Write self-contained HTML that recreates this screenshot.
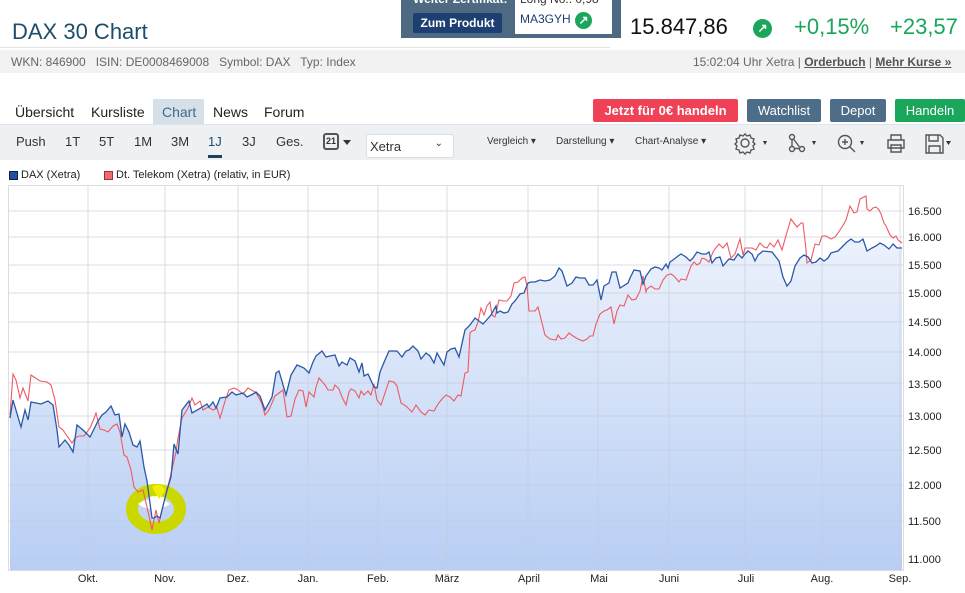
<!DOCTYPE html>
<html><head><meta charset="utf-8"><style>
*{margin:0;padding:0;box-sizing:border-box}
body{width:965px;height:593px;overflow:hidden;background:#fff;font-family:"Liberation Sans",sans-serif;position:relative;color:#333}
.a{position:absolute;white-space:nowrap}
.btn{position:absolute;height:23px;color:#fff;font-size:13px;font-weight:bold;text-align:center;line-height:23px;border-radius:2px}
.tb{position:absolute;top:134px;font-size:13px;color:#333}
.sm{position:absolute;top:136px;font-size:10px;color:#333}
</style></head><body>
<div class="a" style="left:12px;top:19px;font-size:22px;color:#1e4d6b">DAX 30 Chart</div>
<div class="a" style="left:0;top:47px;width:610px;height:1px;background:#e2e2e2"></div>
<div class="a" style="left:0;top:50px;width:965px;height:23px;background:#f2f2f2"></div>
<div class="a" style="left:11px;top:55px;font-size:12px;color:#666">WKN: 846900 &nbsp; ISIN: DE0008469008 &nbsp; Symbol: DAX &nbsp; Typ: Index</div>
<div class="a" style="left:693px;top:55px;font-size:12px;color:#666">15:02:04 Uhr Xetra | <u style="color:#555;font-weight:bold">Orderbuch</u> | <u style="color:#555;font-weight:bold">Mehr Kurse »</u></div>
<div class="a" style="left:401px;top:0;width:220px;height:38px;background:#4e6a82;overflow:hidden"><div class="a" style="left:12px;top:-8px;font-size:12px;color:#fff;font-weight:bold">Weiter Zertifikat:</div></div>
<div class="a" style="left:515px;top:0;width:97px;height:34px;background:#fff;overflow:hidden"><div class="a" style="left:5px;top:-8px;font-size:12px;color:#333">Long No.: 0,98</div></div>
<div class="a" style="left:413px;top:13px;width:89px;height:20px;background:#1d3f72;border-radius:2px;color:#fff;font-size:12px;font-weight:bold;text-align:center;line-height:20px">Zum Produkt</div>
<div class="a" style="left:520px;top:12px;font-size:12px;color:#1d3f72">MA3GYH</div>
<div class="a" style="left:575px;top:12px;width:17px;height:17px;border-radius:50%;background:#1aa65b;color:#fff;font-size:12px;text-align:center;line-height:17px;font-weight:bold">↗</div>
<div class="a" style="left:630px;top:14px;font-size:22px;color:#111">15.847,86</div>
<div class="a" style="left:753px;top:19px;width:19px;height:19px;border-radius:50%;background:#1aa65b;color:#fff;font-size:12px;text-align:center;line-height:19px;font-weight:bold">↗</div>
<div class="a" style="left:794px;top:14px;font-size:22px;color:#1aa65b">+0,15%</div>
<div class="a" style="left:890px;top:14px;font-size:22px;color:#1aa65b">+23,57</div>

<div class="a" style="left:153px;top:99px;width:51px;height:25px;background:#d5e0e9"></div>
<div class="a" style="left:172px;top:124px;width:0;height:0;border-left:7px solid transparent;border-right:7px solid transparent;border-top:6px solid #d5e0e9"></div>
<div class="a" style="left:15px;top:104px;font-size:14px;color:#222">Übersicht</div>
<div class="a" style="left:91px;top:104px;font-size:14px;color:#222">Kursliste</div>
<div class="a" style="left:162px;top:104px;font-size:14px;color:#3e6a8e">Chart</div>
<div class="a" style="left:213px;top:104px;font-size:14px;color:#222">News</div>
<div class="a" style="left:264px;top:104px;font-size:14px;color:#222">Forum</div>
<div class="btn" style="left:593px;top:99px;width:145px;background:#ef4256">Jetzt für 0€ handeln</div>
<div class="btn" style="left:747px;top:99px;width:74px;background:#4e6d88;font-weight:normal">Watchlist</div>
<div class="btn" style="left:830px;top:99px;width:56px;background:#4e6d88;font-weight:normal">Depot</div>
<div class="btn" style="left:895px;top:99px;width:70px;background:#1aa65b;font-weight:normal">Handeln</div>

<div class="a" style="left:0;top:124px;width:965px;height:36px;background:#eef1f4;border-top:1px solid #dde3e8"></div>
<div class="tb" style="left:16px">Push</div><div class="tb" style="left:65px">1T</div><div class="tb" style="left:99px">5T</div><div class="tb" style="left:134px">1M</div><div class="tb" style="left:171px">3M</div><div class="tb" style="left:208px;color:#1e4d6b">1J</div><div class="tb" style="left:242px">3J</div><div class="tb" style="left:276px">Ges.</div>
<div class="a" style="left:208px;top:155px;width:14px;height:3px;background:#1e3f5a"></div>
<div class="a" style="left:323px;top:133px;width:16px;height:17px;border:2px solid #555;border-radius:3px;font-size:9px;font-weight:bold;text-align:center;line-height:13px">21</div>
<div class="a" style="left:343px;top:140px;border-left:4px solid transparent;border-right:4px solid transparent;border-top:5px solid #333"></div>
<div class="a" style="left:366px;top:134px;width:88px;height:24px;background:#fff;border:1px solid #ddd;border-radius:3px;font-size:13px;padding:4px 3px">Xetra<span style="position:absolute;right:10px;top:3px;font-size:10px">⌄</span></div>
<div class="sm" style="left:487px">Vergleich ▾</div><div class="sm" style="left:556px">Darstellung ▾</div><div class="sm" style="left:635px">Chart-Analyse ▾</div>
<svg class="a" style="left:730px;top:129px" width="235" height="28" viewBox="0 0 235 28" fill="none" stroke="#555" stroke-width="1.4">
<circle cx="15" cy="14" r="4"/><path d="M15 5l2 2 3-1 1 3 3 1-1 3 2 2-2 2 1 3-3 1-1 3-3-1-2 2-2-2-3 1-1-3-3-1 1-3-2-2 2-2-1-3 3-1 1-3 3 1z"/>
<path d="M33 12l4 0-2 4z" fill="#333" stroke="none"/>
<circle cx="62" cy="8" r="2.5"/><circle cx="62" cy="20" r="2.5"/><circle cx="72" cy="20" r="2.5"/><path d="M62 10.5v7M64 19.5h5.5M63.5 10l6 8"/>
<path d="M82 12l4 0-2 4z" fill="#333" stroke="none"/>
<circle cx="115" cy="13" r="6.5"/><path d="M120 18l5 5M112 13h6M115 10v6"/>
<path d="M130 12l4 0-2 4z" fill="#333" stroke="none"/>
<path d="M161 11v-5h10v5M158 11h16v8h-16zM161 16h10v7h-10z"/>
<path d="M196 6h14l3 3v15h-17zM199 6v6h9v-6M199 24v-7h11v7"/>
<path d="M216 12l5 0-2.5 4z" fill="#333" stroke="none"/>
</svg>

<div class="a" style="left:9px;top:171px;width:9px;height:9px;background:#1f4fa8;border:1px solid #123"></div>
<div class="a" style="left:21px;top:169px;font-size:11px;color:#222">DAX (Xetra)</div>
<div class="a" style="left:104px;top:171px;width:9px;height:9px;background:#ef6b73;border:1px solid #933"></div>
<div class="a" style="left:116px;top:169px;font-size:11px;color:#222">Dt. Telekom (Xetra) (relativ, in EUR)</div>

<svg class="a" style="left:0;top:0" width="965" height="593" viewBox="0 0 965 593">
<defs><linearGradient id="g" x1="0" y1="185" x2="0" y2="570" gradientUnits="userSpaceOnUse"><stop offset="0" stop-color="#f4f7fd"/><stop offset="1" stop-color="#b8cef4"/></linearGradient></defs>
<rect x="8.5" y="185.5" width="895" height="385" fill="#fff" stroke="#ddd"/>
<polygon fill="url(#g)" points="10,418 13,400 21,427 25,410 28,420 31,402 41,404 48,401 53,405 57,430 59,447 65,440 69,445 73,452 77,425 83,430 90,437 93,431 98,421 102,415 106,412 111,406 115,415 119,414 122,437 125,424 129,432 133,445 137,447 140,441 144,467 147,481 152,518 154,518 157,516 160,518 167,490 171,477 174,444 178,454 182,410 189,401 192,413 199,409 207,404 209,407 213,402 216,408 220,398 227,397 232,392 236,395 243,393 247,397 253,394 256,392 260,396 265,410 272,397 276,373 279,371 286,395 291,375 297,365 304,368 309,373 313,362 316,356 322,351 326,357 330,356 335,355 339,366 342,362 347,365 350,358 355,361 359,372 362,363 364,376 368,374 374,387 377,388 380,372 385,360 389,351 397,351 402,357 406,351 409,350 413,346 418,351 421,359 426,353 430,356 434,363 437,353 444,365 447,352 451,349 455,348 459,357 465,330 470,325 475,318 483,324 491,315 496,306 497,313 500,311 504,313 508,312 512,304 515,301 520,294 524,293 528,283 531,282 535,282 540,280 545,281 550,280 555,276 559,268 562,271 567,286 572,283 576,277 580,278 585,278 589,285 593,285 597,280 601,300 604,286 609,283 612,272 616,272 620,288 628,283 630,278 634,270 640,271 643,284 646,276 651,269 655,267 659,268 662,270 666,264 668,268 670,262 673,260 678,256 681,254 686,257 690,261 693,258 697,252 702,254 706,254 709,252 712,263 716,258 720,257 723,266 729,259 734,260 738,254 742,258 745,254 748,251 752,254 755,261 758,255 763,251 772,252 779,261 783,277 787,286 791,281 795,266 800,258 804,255 808,257 812,263 816,262 820,258 824,261 828,258 831,253 834,252 838,251 841,248 847,242 851,239 855,242 859,242 863,239 867,251 872,248 876,246 880,243 884,245 889,249 893,244 897,248 902,248 902,570 10,570"/>
<g stroke="#c4ccd8" stroke-width="1" opacity="0.65">
<path d="M9 211H903M9 237H903M9 265H903M9 293H903M9 322H903M9 352H903M9 383H903M9 416H903M9 450H903M9 485H903M9 521H903M9 560H903"/>
<path d="M88 186V570M165 186V570M238 186V570M308 186V570M378 186V570M447 186V570M528 186V570M598 186V570M669 186V570M745 186V570M822 186V570M900 186V570"/>
</g>
<ellipse cx="156" cy="509" rx="24" ry="19" fill="none" stroke="#cbd800" stroke-width="12"/>
<path d="M152 487c6-4 12-2 13 4l-6 8z" fill="#f2f000"/>
<path d="M138 504c8-6 24-7 32 0-8 6-24 7-32 0z" fill="#fff"/>
<polyline fill="none" stroke="#ee5a63" stroke-width="1.1" points="10,415 13,374 16,380 20,398 23,388 28,401 31,375 40,381 47,382 51,385 55,400 59,427 63,430 67,436 72,443 75,438 79,436 84,436 90,428 93,421 96,413 100,429 104,430 108,432 113,426 117,424 120,432 124,455 127,457 131,470 134,487 138,492 143,490 147,507 152,530 156,510 159,523 164,502 170,478 176,452 178,438 182,418 188,408 192,398 195,405 200,401 203,410 208,407 213,410 217,408 220,418 223,408 226,398 229,390 234,388 238,390 243,394 248,388 255,392 258,396 262,404 265,415 269,410 275,396 279,393 283,390 287,417 291,416 295,399 299,390 303,391 306,407 309,392 314,397 316,387 319,378 325,385 328,390 333,390 335,385 339,389 342,397 346,405 349,392 351,389 355,391 359,398 361,391 364,395 368,391 371,395 374,384 377,400 381,405 386,390 389,381 394,382 397,386 401,403 406,406 410,410 412,412 416,405 421,412 425,415 429,410 434,411 438,404 442,399 446,395 450,397 454,401 458,395 461,396 465,373 468,372 470,333 472,331 475,330 478,322 481,308 484,315 487,306 490,302 492,315 495,317 499,300 503,301 507,301 511,296 514,283 518,282 522,278 525,277 527,286 529,311 535,311 538,307 545,335 550,339 556,340 558,335 561,339 565,338 569,333 573,336 578,339 583,341 587,339 590,336 593,336 596,324 600,314 604,311 607,310 611,307 614,324 617,311 620,305 624,306 628,295 632,300 636,299 640,291 643,276 646,292 647,289 651,286 655,289 659,289 663,280 667,275 671,274 674,276 679,282 681,279 686,280 691,266 694,262 697,265 700,263 702,258 705,259 709,262 713,252 715,249 719,244 723,248 727,243 731,258 735,254 740,239 743,255 745,248 752,248 756,250 760,243 764,247 767,248 770,243 774,247 778,240 782,250 787,232 791,219 797,227 801,223 803,223 806,250 807,263 811,260 815,244 819,245 822,236 826,236 831,239 835,237 838,233 842,227 846,220 850,206 854,213 857,212 860,199 866,196 867,209 870,211 873,208 876,207 879,210 881,214 884,223 886,226 890,235 893,238 896,236 898,240 902,243"/>
<polyline fill="none" stroke="#2a58a8" stroke-width="1.3" points="10,418 13,400 21,427 25,410 28,420 31,402 41,404 48,401 53,405 57,430 59,447 65,440 69,445 73,452 77,425 83,430 90,437 93,431 98,421 102,415 106,412 111,406 115,415 119,414 122,437 125,424 129,432 133,445 137,447 140,441 144,467 147,481 152,518 154,518 157,516 160,518 167,490 171,477 174,444 178,454 182,410 189,401 192,413 199,409 207,404 209,407 213,402 216,408 220,398 227,397 232,392 236,395 243,393 247,397 253,394 256,392 260,396 265,410 272,397 276,373 279,371 286,395 291,375 297,365 304,368 309,373 313,362 316,356 322,351 326,357 330,356 335,355 339,366 342,362 347,365 350,358 355,361 359,372 362,363 364,376 368,374 374,387 377,388 380,372 385,360 389,351 397,351 402,357 406,351 409,350 413,346 418,351 421,359 426,353 430,356 434,363 437,353 444,365 447,352 451,349 455,348 459,357 465,330 470,325 475,318 483,324 491,315 496,306 497,313 500,311 504,313 508,312 512,304 515,301 520,294 524,293 528,283 531,282 535,282 540,280 545,281 550,280 555,276 559,268 562,271 567,286 572,283 576,277 580,278 585,278 589,285 593,285 597,280 601,300 604,286 609,283 612,272 616,272 620,288 628,283 630,278 634,270 640,271 643,284 646,276 651,269 655,267 659,268 662,270 666,264 668,268 670,262 673,260 678,256 681,254 686,257 690,261 693,258 697,252 702,254 706,254 709,252 712,263 716,258 720,257 723,266 729,259 734,260 738,254 742,258 745,254 748,251 752,254 755,261 758,255 763,251 772,252 779,261 783,277 787,286 791,281 795,266 800,258 804,255 808,257 812,263 816,262 820,258 824,261 828,258 831,253 834,252 838,251 841,248 847,242 851,239 855,242 859,242 863,239 867,251 872,248 876,246 880,243 884,245 889,249 893,244 897,248 902,248"/>
<g font-family="Liberation Sans,sans-serif" font-size="11" fill="#222">
<text x="908" y="215">16.500</text><text x="908" y="241">16.000</text><text x="908" y="269">15.500</text><text x="908" y="297">15.000</text><text x="908" y="326">14.500</text><text x="908" y="356">14.000</text><text x="908" y="388">13.500</text><text x="908" y="420">13.000</text><text x="908" y="454">12.500</text><text x="908" y="489">12.000</text><text x="908" y="525">11.500</text><text x="908" y="563">11.000</text>
<g text-anchor="middle"><text x="88" y="582">Okt.</text><text x="165" y="582">Nov.</text><text x="238" y="582">Dez.</text><text x="308" y="582">Jan.</text><text x="378" y="582">Feb.</text><text x="447" y="582">März</text><text x="529" y="582">April</text><text x="599" y="582">Mai</text><text x="669" y="582">Juni</text><text x="746" y="582">Juli</text><text x="822" y="582">Aug.</text><text x="900" y="582">Sep.</text></g>
</g>
</svg>
</body></html>
